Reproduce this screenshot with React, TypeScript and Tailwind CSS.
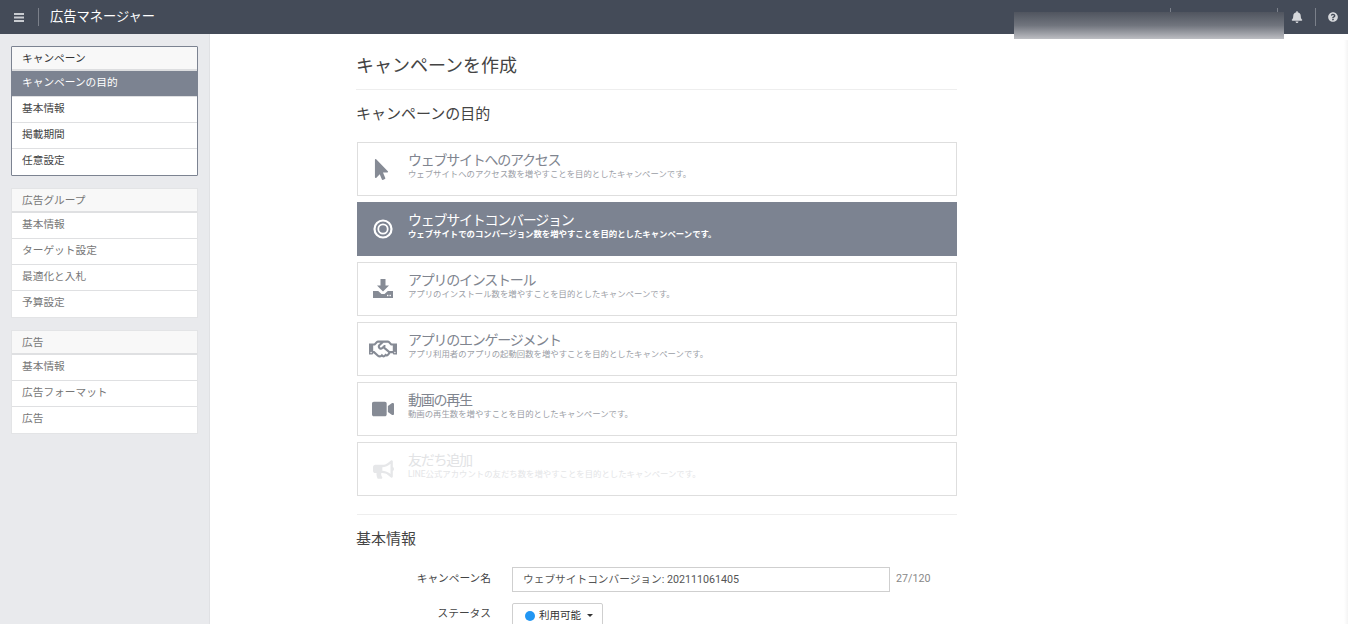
import React from "react";
import { FaBell, FaBullhorn, FaMousePointer, FaQuestionCircle, FaRegHandshake, FaVideo } from "react-icons/fa";

const font = "font-['Roboto','Noto_Sans_CJK_JP','Noto_Sans',sans-serif]";

function Group({ title, items, active, strong }: { title: string; items: string[]; active?: string; strong?: boolean }) {
  return (
    <div className={`mb-3 border bg-white ${strong ? "border-[#7c8391] rounded-[1px]" : "border-[#e3e4e6]"}`}>
      <div className={`h-[24px] bg-[#f8f8f8] border-b-2 pl-[10px] text-[10.700px] leading-[23px] ${strong ? "border-[#dddee0] text-[#333]" : "border-[#dfe0e2] text-[#777]"}`}>{title}</div>
      {items.map((t, i) => (
        <div
          key={t}
          className={`h-[26px] pl-[10px] text-[10.700px] leading-[24px] ${i < items.length - 1 ? "border-b border-[#dfe0e2]" : ""} ${t === active ? "bg-[#7c8391] text-white border-[#7c8391]" : strong ? "text-[#444]" : "text-[#777]"}`}
        >
          {t}
        </div>
      ))}
    </div>
  );
}

function Target() {
  return (
    <svg width="20" height="20" viewBox="0 0 20 20" fill="none" stroke="currentColor">
      <circle cx="10" cy="10" r="8.500" strokeWidth="2.200" />
      <circle cx="10" cy="10" r="4.700" strokeWidth="1.800" />
    </svg>
  );
}

function Install() {
  return (
    <svg width="20" height="20" viewBox="0 0 20 20" fill="currentColor">
      <path d="M7.500 0h5v6.500H16l-6 6-6-6h3.500z" />
      <path d="M0 12h5.200L8.500 15h3l3.300-3H20v7H0z" />
      <rect x="14" y="15.800" width="1.400" height="1.400" fill="#fff" />
      <rect x="16.500" y="15.800" width="1.400" height="1.400" fill="#fff" />
    </svg>
  );
}

function Card({ icon, title, desc, selected, disabled }: { icon: React.ReactNode; title: string; desc: string; selected?: boolean; disabled?: boolean }) {
  return (
    <div className={`flex h-[54px] items-center border ${selected ? "border-[#7c8391] bg-[#7c8391] text-white" : "border-[#dedede] bg-white"}`}>
      <div className={`flex w-[50px] shrink-0 justify-center ${selected ? "text-white" : disabled ? "text-[#e6e7e9]" : "text-[#868b95]"}`}>{icon}</div>
      <div className="min-w-0 pb-[8px]">
        <div className={`text-[14px] leading-[18px] tracking-[-1.250px] ${selected ? "text-white" : disabled ? "text-[#e2e3e5]" : "text-[#80858f]"}`}>{title}</div>
        <div className={`mt-[-1px] text-[8.400px] leading-[12px] ${selected ? "font-bold text-white" : disabled ? "text-[#e4e5e7]" : "text-[#9b9ea6]"}`}>{desc}</div>
      </div>
    </div>
  );
}

export default function App() {
  return (
    <div className={`${font} relative h-[624px] w-full overflow-hidden bg-white`}>
      <header className="flex h-[34px] items-center bg-[#444b58] text-white">
        <svg className="ml-[14px] text-[#c9ccd1]" width="10" height="9" viewBox="0 0 10 9" fill="currentColor">
          <rect width="10" height="2" y="0" />
          <rect width="10" height="2" y="3.500" />
          <rect width="10" height="2" y="7" />
        </svg>
        <div className="ml-[14px] h-[18px] w-px bg-[#7b808a]" />
        <div className="ml-[11px] text-[13.250px] text-white">広告マネージャー</div>
        <div className="ml-auto flex items-center">
          <div className="h-[10px] w-[10px] bg-[#d6d8db]" />
          <div className="ml-[70px] h-[10px] w-[25px] bg-[#363b45]" />
          <div className="ml-[25px] h-[18px] w-px bg-[#7b808a]" />
          <div className="ml-[14px] h-[10px] w-[10px] rounded-full bg-[#d6d8db]" />
          <div className="ml-[82px] h-[18px] w-px bg-[#7b808a]" />
          <FaBell className="ml-[13px] text-[#d6d8db]" size={12} />
          <div className="ml-[12px] h-[18px] w-px bg-[#7b808a]" />
          <FaQuestionCircle className="ml-[12px] mr-[10px] text-[#d6d8db]" size={10} />
        </div>
      </header>
      <div className="absolute left-[1014px] top-[12px] h-[27px] w-[270px] bg-gradient-to-b from-[#50555f] via-[#71757e] to-[#bdbec3]" />
      <div className="absolute right-0 top-[40px] h-[584px] w-[4px] bg-gradient-to-r from-white to-[#f4f4f4]" />
      <div className="flex h-[590px]">
        <aside className="w-[210px] shrink-0 border-r border-[#e0e1e4] bg-[#e9eaed] pl-[11px] pr-[11px] pt-[12px]">
          <Group strong title="キャンペーン" items={["キャンペーンの目的", "基本情報", "掲載期間", "任意設定"]} active="キャンペーンの目的" />
          <Group title="広告グループ" items={["基本情報", "ターゲット設定", "最適化と入札", "予算設定"]} />
          <Group title="広告" items={["基本情報", "広告フォーマット", "広告"]} />
        </aside>
        <main className="flex-1 pl-[147px]">
          <div className="w-[600px]">
            <h1 className="ml-[-1px] h-[56px] border-b border-[#eeeeee] pt-[19px] text-[18px] leading-[25px] text-[#444]">キャンペーンを作成</h1>
            <h2 className="ml-[-1px] mt-[14px] text-[15px] leading-[21px] text-[#444]">キャンペーンの目的</h2>
            <div className="mt-[17px] flex flex-col gap-[6px]">
              <Card icon={<FaMousePointer size={21} className="ml-[-3px]" />} title="ウェブサイトへのアクセス" desc="ウェブサイトへのアクセス数を増やすことを目的としたキャンペーンです。" />
              <Card selected icon={<Target />} title="ウェブサイトコンバージョン" desc="ウェブサイトでのコンバージョン数を増やすことを目的としたキャンペーンです。" />
              <Card icon={<Install />} title="アプリのインストール" desc="アプリのインストール数を増やすことを目的としたキャンペーンです。" />
              <Card icon={<FaRegHandshake size={28} />} title="アプリのエンゲージメント" desc="アプリ利用者のアプリの起動回数を増やすことを目的としたキャンペーンです。" />
              <Card icon={<FaVideo size={22} />} title="動画の再生" desc="動画の再生数を増やすことを目的としたキャンペーンです。" />
              <Card disabled icon={<FaBullhorn size={21} />} title="友だち追加" desc="LINE公式アカウントの友だち数を増やすことを目的としたキャンペーンです。" />
            </div>
            <div className="mt-[18px] border-t border-[#eeeeee]" />
            <h2 className="ml-[-1px] mt-[14px] text-[15px] leading-[21px] text-[#444]">基本情報</h2>
            <div className="mt-[17px] flex items-center">
              <label className="w-[134px] text-right text-[10.700px] text-[#444]">キャンペーン名</label>
              <div className="ml-[21px] h-[25px] w-[378px] border border-[#cfcfcf] pl-[10px] text-[10.700px] leading-[23px] text-[#555]">ウェブサイトコンバージョン: 202111061405</div>
              <span className="ml-[6px] text-[10.700px] text-[#888]">27/120</span>
            </div>
            <div className="mt-[11px] flex items-start">
              <label className="w-[134px] pt-[3px] text-right text-[10.700px] leading-[16px] text-[#444]">ステータス</label>
              <div className="ml-[21px] flex h-[30px] w-[91px] items-center rounded-[2px] border border-[#cfcfcf] pb-[5px] pl-[12px] text-[10.500px] text-[#333]">
                <span className="h-[10px] w-[10px] rounded-full bg-[#2196f3]" />
                <span className="ml-[4px]">利用可能</span>
                <span className="ml-[6px] h-0 w-0 border-x-[3px] border-t-[3px] border-x-transparent border-t-[#333]" />
              </div>
            </div>
          </div>
        </main>
      </div>
    </div>
  );
}
